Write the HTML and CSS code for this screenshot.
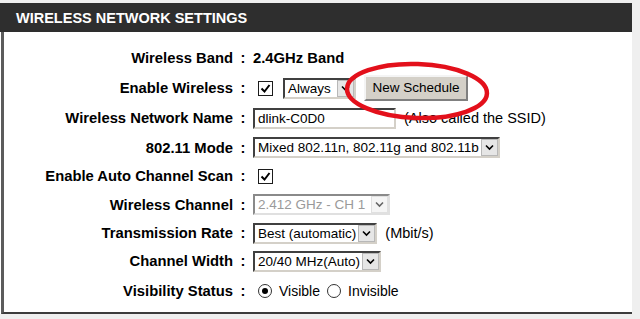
FILE: index.html
```html
<!DOCTYPE html>
<html lang="en">

<head>
    <meta charset="UTF-8">
    <title>Wireless Network Settings</title>
    <link rel="stylesheet" href="styles.css">
</head>

<body>
    <div class="panel">
        <div class="title">WIRELESS NETWORK SETTINGS</div>
        <div class="content">
            <div class="row h30">
                <label>Wireless Band</label><span class="colon">:</span>
                <div class="value"><b>2.4GHz Band</b></div>
            </div>
            <div class="row h30">
                <label>Enable Wireless</label><span class="colon">:</span>
                <div class="value">
                    <span class="check"></span>
                    <span class="select w-always">Always<span class="arrow"></span></span>
                    <span class="btn">New Schedule</span>
                </div>
            </div>
            <div class="row h30">
                <label>Wireless Network Name</label><span class="colon">:</span>
                <div class="value">
                    <span class="input">dlink-C0D0</span>
                    <span class="note">(Also called the SSID)</span>
                </div>
            </div>
            <div class="row">
                <label>802.11 Mode</label><span class="colon">:</span>
                <div class="value">
                    <span class="select w-mode">Mixed 802.11n, 802.11g and 802.11b<span class="arrow"></span></span>
                </div>
            </div>
            <div class="row h28">
                <label>Enable Auto Channel Scan</label><span class="colon">:</span>
                <div class="value"><span class="check"></span></div>
            </div>
            <div class="row">
                <label>Wireless Channel</label><span class="colon">:</span>
                <div class="value">
                    <span class="select disabled w-chan">2.412 GHz - CH 1<span class="arrow"></span></span>
                </div>
            </div>
            <div class="row h28">
                <label>Transmission Rate</label><span class="colon">:</span>
                <div class="value">
                    <span class="select">Best (automatic)<span class="arrow"></span></span>
                    <span class="note">(Mbit/s)</span>
                </div>
            </div>
            <div class="row h28">
                <label>Channel Width</label><span class="colon">:</span>
                <div class="value">
                    <span class="select">20/40 MHz(Auto)<span class="arrow"></span></span>
                </div>
            </div>
            <div class="row h32">
                <label>Visibility Status</label><span class="colon">:</span>
                <div class="value radios">
                    <span class="radio on"></span><span>Visible</span>
                    <span class="radio"></span><span>Invisible</span>
                </div>
            </div>
        </div>
        <svg class="circle" width="150" height="64" viewBox="0 0 150 64">
            <ellipse cx="74" cy="31" rx="70" ry="27" fill="none" stroke="#e3101b" stroke-width="4.5" transform="rotate(2 74 31)"/>
        </svg>
    </div>
</body>

</html>
```

FILE: styles.css
```css
body {
    margin: 0;
    background: #efefef;
    font-family: "Liberation Sans", Arial, sans-serif;
    font-size: 13.5px;
    color: #000;
}

.panel {
    position: relative;
    width: 632px;
    margin-top: 3px;
    background: #fff;
}

.title {
    height: 29px;
    line-height: 30px;
    padding-left: 16px;
    background: #2e2e2e;
    color: #fff;
    font-weight: bold;
    font-size: 14.5px;
}

.content {
    margin-left: 1px;
    border-left: 3px solid #5c5c5c;
    border-bottom: 2px solid #3c3c3c;
    padding: 11px 0 5px;
}

.row {
    display: grid;
    grid-template-columns: 229px 20px 1fr;
    height: 29px;
    align-items: center;
}

.h28 {
    height: 28px;
}

.h30 {
    height: 30px;
}

.h32 {
    height: 32px;
}

label {
    text-align: right;
    font-weight: bold;
    font-size: 14.8px;
}

.colon {
    text-align: center;
    font-weight: bold;
    font-size: 14.8px;
}

.value {
    display: flex;
    align-items: center;
    gap: 8px;
    font-size: 14.5px;
}

.value b {
    font-size: 14.8px;
}

.radios {
    gap: 7px;
    font-size: 14px;
}

.check {
    width: 13px;
    height: 13px;
    margin-left: 5px;
    border: 1px solid #1c1c1c;
    background: #fff url("data:image/svg+xml,%3Csvg xmlns='http://www.w3.org/2000/svg' width='13' height='13'%3E%3Cpath d='M2.5 6.5 L5.5 9.5 L10.5 3' fill='none' stroke='%23000' stroke-width='2'/%3E%3C/svg%3E") no-repeat;
}

.select {
    display: inline-flex;
    align-items: center;
    height: 17px;
    padding-left: 3px;
    border: 2px solid;
    border-color: #404040 #d4d0c8 #d4d0c8 #404040;
    font-size: 13.5px;
    background: #fff;
    white-space: nowrap;
}

.arrow {
    width: 17px;
    height: 17px;
    margin-left: 2px;
    box-sizing: border-box;
    border: 1px solid #b8b8b8;
    background: #e6e6e6 url("data:image/svg+xml,%3Csvg xmlns='http://www.w3.org/2000/svg' width='15' height='15'%3E%3Cpath d='M4 5.5 L7.5 9 L11 5.5' fill='none' stroke='%23000' stroke-width='1.6'/%3E%3C/svg%3E") no-repeat center;
}

.w-always {
    width: 66px;
    justify-content: space-between;
    margin-left: 2px;
}

.w-chan {
    width: 130px;
    justify-content: space-between;
}

.disabled {
    color: #9a9a9a;
    border-color: #8a8a8a #e0e0e0 #e0e0e0 #8a8a8a;
}

.disabled .arrow {
    background-color: #f0f0f0;
    border-color: #ccc;
    opacity: 0.6;
}

.btn {
    width: 100px;
    height: 22px;
    line-height: 22px;
    text-align: center;
    background: #d4d0c8;
    border: 2px solid;
    border-color: #f4f4f4 #808080 #808080 #f4f4f4;
    font-size: 13.5px;
}

.input {
    width: 136px;
    height: 17px;
    line-height: 17px;
    padding-left: 3px;
    border: 2px solid;
    border-color: #404040 #d4d0c8 #d4d0c8 #404040;
    font-size: 13.5px;
}

.radio {
    width: 12px;
    height: 12px;
    margin-left: 5px;
    border: 1px solid #333;
    border-radius: 50%;
    background: #fff;
    position: relative;
}

.radios .radio + span + .radio {
    margin-left: 0;
}

.radio.on::after {
    content: "";
    position: absolute;
    left: 3px;
    top: 3px;
    width: 6px;
    height: 6px;
    border-radius: 50%;
    background: #000;
}

.circle {
    position: absolute;
    left: 343px;
    top: 57px;
}
```
